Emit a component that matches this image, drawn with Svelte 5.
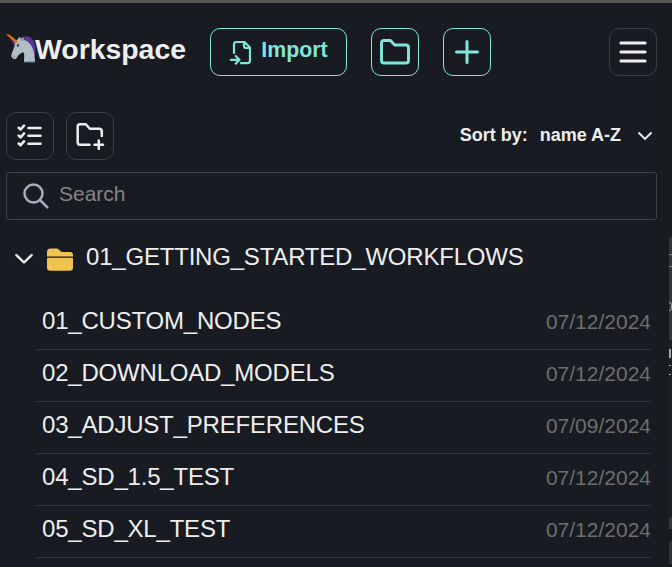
<script>
  const files = [
    ['01_CUSTOM_NODES', '07/12/2024'],
    ['02_DOWNLOAD_MODELS', '07/12/2024'],
    ['03_ADJUST_PREFERENCES', '07/09/2024'],
    ['04_SD_1.5_TEST', '07/12/2024'],
    ['05_SD_XL_TEST', '07/12/2024']
  ];
</script>

<div class="page">
  <aside class="drawer">
    <header>
      <svg class="unicorn" width="30" height="31" viewBox="0 0 30 31">
        <path d="M14 6C17 2 25 2 28 9c2 4 1.500 9 1 14l-5-6L17 8z" fill="#5c3592" />
        <path d="M5.500 7.500l3-1 2 3-3 2z" fill="#5c3592" />
        <path d="M11.500 6.500l2-2.500 1.500 1.500 2.500-1 .5 2.500c4 1 7 4 8.500 8 1.500 3 2.500 9 2.500 14H18c0-5 1-8-1-10-1.500 1-3 2-4 2.500l-2 3c-1 2-4 2-5 0-1-1-1-3 0-4.500l2.500-7c0-3 1-5 3-6.500z" fill="#b0bec5" />
        <path d="M0 1l3 .4 9 7L10 10.500z" fill="#f57c00" />
        <path d="M3 1.500L2 4M6 4L4 6M9 6L7 9" stroke="#ad4a12" stroke-width=".9" />
        <path d="M14 7l1-3 1 2 2-1-1 3" fill="#78909c" />
        <ellipse cx="12" cy="12.500" rx="1.200" ry="1.400" fill="#37474f" />
        <path d="M6 21.500l1 1M7 24.500l2-1M18 29h11" stroke="#607d8b" stroke-width="1" fill="none" />
      </svg>
      <h1>Workspace</h1>
      <button class="teal import">
        <svg width="24" height="26" viewBox="0 0 24 26" fill="none" stroke="currentColor" stroke-width="2.200" stroke-linecap="round" stroke-linejoin="round">
          <path d="M5 13V4.500Q5 2 7.500 2h8l5.500 5.500v13q0 2.700-2.700 2.700H12M15 2v4q0 2 2 2h4M1.800 19.800h8.400M6.700 16l3.800 3.800-3.800 3.800" />
        </svg>
        <span>Import</span>
      </button>
      <button class="teal square">
        <svg width="32" height="28" viewBox="0 0 32 28" fill="none" stroke="currentColor" stroke-width="2.900" stroke-linejoin="round">
          <path d="M2.500 5Q2.500 2.500 5 2.500h6.500l4.200 4.500H27q2.500 0 2.500 2.500v13Q29.500 25 27 25H5q-2.500 0-2.500-2.500z" />
        </svg>
      </button>
      <button class="teal square">
        <svg width="24" height="24" viewBox="0 0 24 24" stroke="currentColor" stroke-width="3" stroke-linecap="round"><path d="M12 1.500v21M1.500 12h21" /></svg>
      </button>
      <button class="square menu">
        <svg width="28" height="24" viewBox="0 0 28 24" stroke="currentColor" stroke-width="3" stroke-linecap="round"><path d="M1.900 3h24.200M1.900 12h24.200M1.900 21h24.200" /></svg>
      </button>
    </header>

    <div class="tools">
      <button class="square">
        <svg width="26" height="24" viewBox="0 0 26 24" fill="none" stroke="currentColor" stroke-width="2.600" stroke-linecap="round" stroke-linejoin="round">
          <path d="M11.500 4h12M11.500 11.800h12M11.500 19.700h12M1.700 3.800l1.900 1.700L7 1.700M1.700 11.600l1.900 1.700L7 9.500M1.700 19.500l1.900 1.700L7 17.400" />
        </svg>
      </button>
      <button class="square">
        <svg width="30" height="28" viewBox="0 0 30 28" fill="none" stroke="currentColor" stroke-width="2.500" stroke-linecap="round" stroke-linejoin="round">
          <path d="M14.500 22.700H5Q2.700 22.700 2.700 20V4.500Q2.700 2.200 5 2.200h5.800l4 4.600H24q2.800 0 2.800 2.800V14M19.500 22.700h8.500M23.800 18.400v8.500" />
        </svg>
      </button>
      <div class="sort">
        <span>Sort by:</span><span>name A-Z</span>
        <svg width="16" height="10" viewBox="0 0 16 10" fill="none" stroke="currentColor" stroke-width="1.900"><path d="M1.500 1.500L8 8l6.500-6.500" /></svg>
      </div>
    </div>

    <div class="search">
      <svg width="26" height="26" viewBox="0 0 26 26" fill="none" stroke="#a0aec0" stroke-width="2.500" stroke-linecap="round"><circle cx="10.500" cy="10.500" r="9" /><path d="M17 17l7.300 7.300" /></svg>
      <span>Search</span>
    </div>

    <div class="folder">
      <svg class="chev" width="20" height="12" viewBox="0 0 20 12" fill="none" stroke="currentColor" stroke-width="2.400" stroke-linecap="round" stroke-linejoin="round"><path d="M2.400 2.200l7.600 7.300 7.600-7.300" /></svg>
      <svg class="yellow" width="26" height="23" viewBox="0 0 26 23" fill="#efc44f">
        <path d="M0 8.500V4Q0 .5 3.500 .5h6q1.300 0 2.300 1l1.700 1.700q1 .8 2.500 .8H23q3 0 3 3v1.500z" />
        <path d="M1 9.700h24q1 0 1 1V19.500Q26 22.700 22.800 22.700H3.200Q0 22.700 0 19.500V10.700q0-1 1-1z" />
      </svg>
      <span>01_GETTING_STARTED_WORKFLOWS</span>
    </div>

    <ul>
      {#each files as [name, date]}
        <li><span>{name}</span><time>{date}</time></li>
      {/each}
    </ul>
  </aside>
  <div class="canvas">
    <div class="node"><i></i><b></b></div>
    <div class="note"><i></i><b></b></div>
    <div class="tail"></div>
    <div class="foot"></div>
  </div>
</div>

<style>
  :global(body) { margin: 0; background: #1c1b1a; }
  * { box-sizing: border-box; }
  .page {
    width: 672px; height: 567px; overflow: hidden; display: flex;
    border-top: 3px solid #555; background: #1c1b1b;
    font-family: "Liberation Sans", Arial, sans-serif; color: #eee;
  }
  .drawer { width: 669px; flex: none; height: 564px; background: #181b22; border-top-right-radius: 8px; padding: 25px 12px 0 6px; }
  header { display: flex; height: 48px; }
  .unicorn { margin-top: 5px; flex: none; }
  h1 { margin: 5px 0 0 -1px; width: 175px; font-size: 28.400px; line-height: 32px; font-weight: 700; }
  button {
    display: flex; align-items: center; justify-content: center; flex: none; height: 48px; padding: 0;
    background: transparent; border: 1px solid #3c3e42; border-radius: 10px; color: #eee; font: inherit;
  }
  .teal { color: #81e6d9; border-color: #81e6d9; }
  .square { width: 48px; }
  .import { width: 137px; margin-right: 24px; gap: 8px; font-size: 21.300px; font-weight: 700; }
  .import svg { margin-top: 1px; }
  .import span { margin-top: -4px; line-height: 24px; }
  header .square + .square { margin-left: 24px; }
  header .menu.square { margin-left: auto; }
  .tools { display: flex; gap: 12px; margin-top: 36px; height: 48px; }
  .sort { margin: 13px 4px 0 auto; height: 20px; display: flex; align-items: center; font-size: 18px; line-height: 20px; font-weight: 700; }
  .sort span + span { margin-left: 12px; }
  .sort svg { margin: 2px 0 0 16px; }
  .search { margin-top: 12px; height: 48px; border: 1px solid #404247; border-radius: 3px; display: flex; align-items: center; padding-left: 16px; color: #858585; font-size: 21px; }
  .search span { margin: -4px 0 0 10px; line-height: 26px; }
  .folder { height: 52px; margin-top: 12px; display: flex; align-items: center; font-size: 24px; line-height: 28px; }
  .chev { margin: 2px 0 0 8px; }
  .yellow { margin: 2px 0 0 13px; }
  .folder span { margin: -2px 0 0 13px; letter-spacing: -0.2px; }
  ul { list-style: none; margin: 14px 6px 0 30px; padding: 0; }
  li { height: 52px; border-bottom: 1px solid #2e3440; padding: 0 0 5px 6px; display: flex; align-items: center; justify-content: space-between; font-size: 24px; line-height: 28px; letter-spacing: -0.2px; }
  time { color: #6e6e6e; font-size: 21px; margin-top: 2px; letter-spacing: 0; }
  .canvas { width: 3px; padding-top: 235px; }
  .node { height: 102px; background: #353535; padding-top: 16px; }
  .node i { display: block; height: 13px; border: 1px solid #888; border-width: 1px 0; }
  .node b { display: block; width: 3px; height: 9px; margin-top: 35px; border: 1px solid #999; border-left: 0; border-radius: 0 4px 4px 0; }
  .note { height: 178px; background: #211f1c; padding-top: 9px; }
  .note i { display: block; width: 2px; height: 9px; background: #aaa; }
  .note b { display: block; width: 2px; height: 10px; margin-top: 7px; border: 1px solid #bbb; border-width: 1px 0; }
  .tail { height: 12px; background: #383838; border-bottom: 1px solid #111; }
  .foot { height: 22px; margin-top: 12px; background: #333; }
</style>
